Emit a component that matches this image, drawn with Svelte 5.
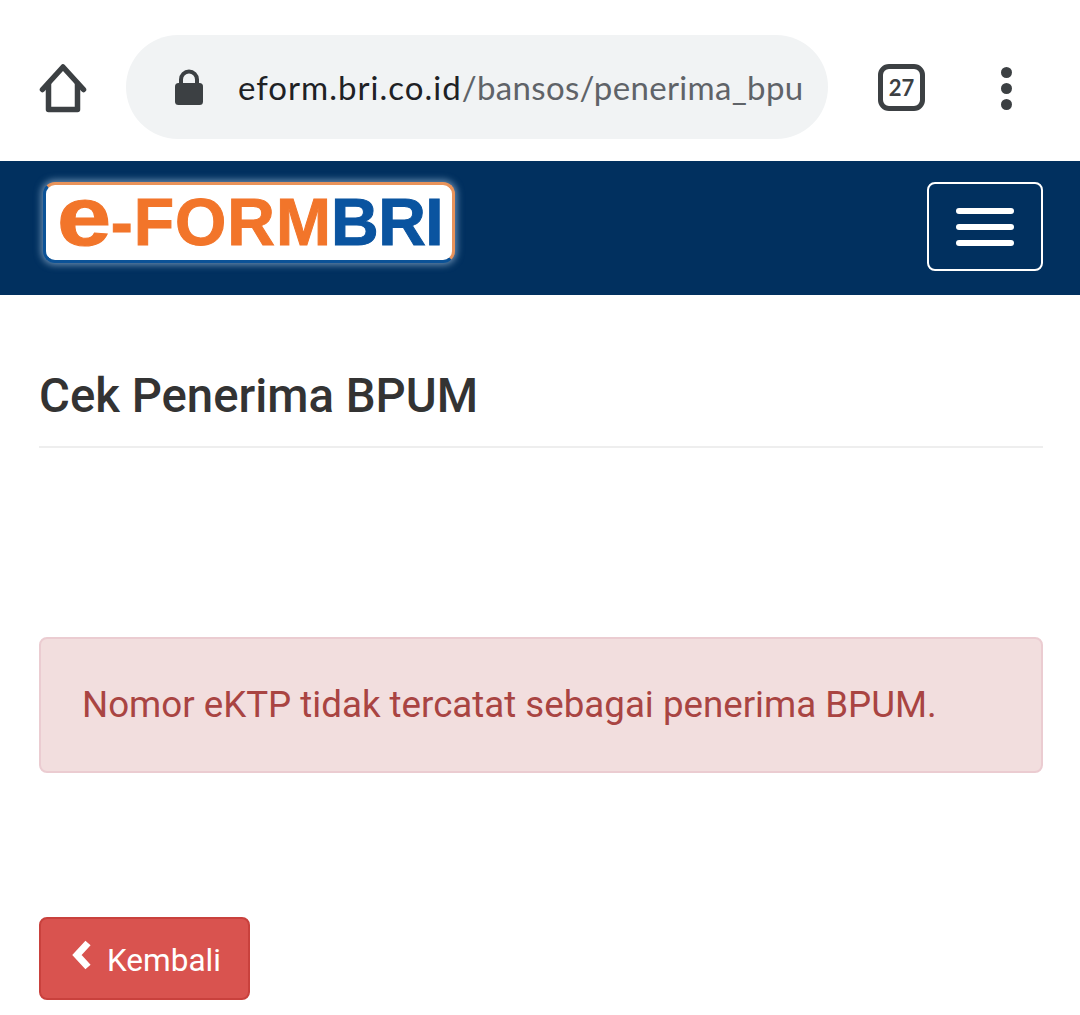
<script>
  let message = 'Nomor eKTP tidak tercatat sebagai penerima BPUM.';
</script>

<div class="page">
  <header class="browser">
    <svg class="home" width="50" height="50" viewBox="0 0 50 50" fill="none" stroke="#3c4043" stroke-width="5.500" stroke-linejoin="round" stroke-linecap="round">
      <path d="M4.500 26.500L25 4L45.500 26.500"/>
      <path d="M10.500 21V46.500H39.500V21"/>
    </svg>
    <div class="omnibox">
      <svg class="lock" width="30" height="38" viewBox="0 0 30 38">
        <path d="M7 17V11.500a8 8 0 0 1 16 0V17" fill="none" stroke="#3c4043" stroke-width="4"/>
        <rect x="1" y="15" width="28" height="22" rx="3.500" fill="#3c4043"/>
      </svg>
      <div class="url"><span class="host">eform.bri.co.id</span>/bansos/penerima_bpu</div>
    </div>
    <div class="tabs">27</div>
    <div class="dots"><span></span><span></span><span></span></div>
  </header>

  <nav class="navbar">
    <div class="logo">
      <span class="orange"><span class="e">e</span>-FORM</span><span class="blue">BRI</span>
    </div>
    <button class="toggle" aria-label="Menu">
      <span></span><span></span><span></span>
    </button>
  </nav>

  <main class="content">
    <h1>Cek Penerima BPUM</h1>
    <div class="alert">{message}</div>
    <button class="back">
      <svg width="22" height="30" viewBox="0 0 22 30"><path d="M17 3L6 15L17 27" fill="none" stroke="#fff" stroke-width="7"/></svg>
      <span>Kembali</span>
    </button>
  </main>
</div>

<style>
  :global(body) {
    margin: 0;
    background: #fff;
  }

  .page {
    height: 1015px;
    overflow: hidden;
    font-family: Roboto, "Liberation Sans", sans-serif;
  }

  .browser {
    height: 161px;
    box-sizing: border-box;
    padding: 35px 0 22px 38px;
    display: flex;
    align-items: flex-start;
  }

  .home {
    margin: 28px 38px 0 0;
    flex-shrink: 0;
  }

  .omnibox {
    width: 702px;
    height: 104px;
    flex-shrink: 0;
    box-sizing: border-box;
    padding-left: 48px;
    border-radius: 52px;
    background: #f1f3f4;
    display: flex;
    align-items: center;
  }

  .lock {
    flex-shrink: 0;
    margin-right: 34px;
  }

  .url {
    font-family: Lato, sans-serif;
    font-size: 33px;
    letter-spacing: 0.320px;
    color: #5f6368;
    white-space: nowrap;
  }

  .host {
    color: #202124;
    letter-spacing: 1.020px;
  }

  .tabs {
    width: 47px;
    height: 47px;
    margin: 29px 0 0 50px;
    box-sizing: border-box;
    border: 5px solid #3c4043;
    border-radius: 11px;
    font-family: Lato, sans-serif;
    font-size: 22px;
    font-weight: 700;
    color: #3c4043;
    display: flex;
    align-items: center;
    justify-content: center;
  }

  .dots {
    margin: 32px 0 0 76px;
    display: flex;
    flex-direction: column;
    gap: 5px;
  }

  .dots span {
    width: 11px;
    height: 11px;
    border-radius: 50%;
    background: #3c4043;
  }

  .navbar {
    height: 134px;
    box-sizing: border-box;
    padding: 21px 37px 0 43px;
    background: #01305f;
    display: flex;
    justify-content: space-between;
    align-items: flex-start;
  }

  .logo {
    width: 412px;
    height: 81px;
    box-sizing: border-box;
    padding-left: 11px;
    border-radius: 12px;
    border: 3px solid #0b5297;
    border-top-color: #e9935a;
    border-right-color: #e9935a;
    background: #fff;
    box-shadow: 0 0 7px 2px rgba(190, 215, 240, 0.55);
    font-family: "Liberation Sans", sans-serif;
    font-weight: 700;
    font-size: 66px;
    line-height: 77px;
    white-space: nowrap;
    display: flex;
    align-items: center;
  }

  .orange {
    color: #f2752a;
    letter-spacing: 1px;
    -webkit-text-stroke: 1px #f2752a;
    filter: blur(0.6px);
  }

  .e {
    display: inline-block;
    font-size: 84px;
    line-height: 60px;
    transform: scaleX(1.160);
    transform-origin: left;
    margin-right: 6px;
  }

  .blue {
    margin-left: -1px;
    color: #0a54a0;
    letter-spacing: -0.500px;
    -webkit-text-stroke: 1px #0a54a0;
    filter: blur(0.6px);
  }

  .toggle {
    width: 116px;
    height: 89px;
    padding: 0;
    box-sizing: border-box;
    border: 2px solid #fff;
    border-radius: 8px;
    background: transparent;
    display: flex;
    flex-direction: column;
    align-items: center;
    justify-content: center;
    gap: 10px;
  }

  .toggle span {
    width: 58px;
    height: 6px;
    border-radius: 3px;
    background: #fff;
  }

  .content {
    padding: 0 37px 0 39px;
  }

  h1 {
    margin: 0;
    padding: 72px 0 20px;
    border-bottom: 2px solid #eeeeee;
    font-size: 47.300px;
    line-height: 59px;
    font-weight: 500;
    color: #333333;
  }

  .alert {
    margin-top: 189px;
    height: 136px;
    box-sizing: border-box;
    padding-left: 41px;
    border: 2px solid #ebccd1;
    border-radius: 8px;
    background: #f2dede;
    color: #a94442;
    font-size: 36.700px;
    line-height: 132px;
    white-space: nowrap;
  }

  .back {
    margin-top: 144px;
    width: 211px;
    height: 83px;
    padding: 3px 0 0 30px;
    box-sizing: border-box;
    border: 2px solid #c9413d;
    border-radius: 8px;
    background: #d9534f;
    color: #fff;
    font-family: inherit;
    font-size: 31.500px;
    display: flex;
    align-items: center;
    gap: 14px;
  }

  .back svg {
    margin-top: -11px;
    flex-shrink: 0;
  }
</style>
